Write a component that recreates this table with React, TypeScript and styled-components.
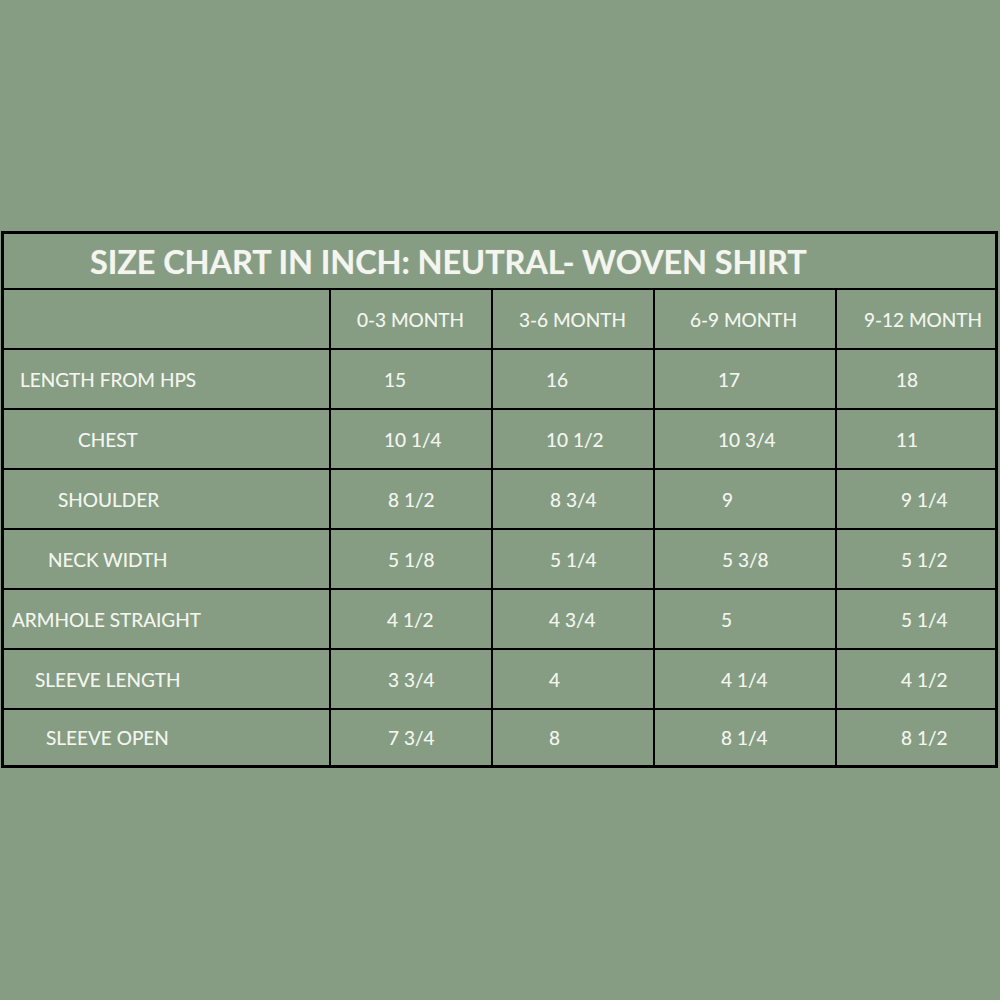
import React from "react";
import styled, { createGlobalStyle } from "styled-components";

const Global = createGlobalStyle`
  html, body { margin: 0; padding: 0; background: #869d84; }
  body { width: 1000px; height: 1000px; overflow: hidden; }
`;

const Page = styled.div`
  width: 1000px;
  height: 1000px;
  background: #869d84;
  padding: 231px 0 0 1px;
  box-sizing: border-box;
  font-family: Lato, "Open Sans", "Liberation Sans", sans-serif;
  color: #f3f5ee;
`;

const Table = styled.div`
  width: 997px;
  border: 3px solid #000;
  box-sizing: border-box;
  display: flex;
  flex-direction: column;
`;

const TitleRow = styled.div`
  height: 54px;
  display: flex;
  align-items: center;
  padding-left: 86px;
  font-size: 32.5px;
  font-weight: 700;
  letter-spacing: -0.1px;
  text-shadow: 0 0 1px rgba(255, 255, 255, 0.4);
`;

const Row = styled.div<{ $h: number }>`
  display: grid;
  grid-template-columns: 325px 162px 162px 182px 160px;
  height: ${(p) => p.$h}px;
  border-top: 2px solid #000;
`;

const Cell = styled.div<{ $pad: number; $first?: boolean }>`
  display: flex;
  align-items: center;
  padding-left: ${(p) => p.$pad}px;
  border-left: ${(p) => (p.$first ? "none" : "2px solid #000")};
  font-size: 19px;
  white-space: nowrap;
  text-shadow: 0 0 0.5px rgba(255, 255, 255, 0.5);
`;

const headers = [
  { t: "0-3 MONTH", p: 26 },
  { t: "3-6 MONTH", p: 26 },
  { t: "6-9 MONTH", p: 35 },
  { t: "9-12 MONTH", p: 27 },
];

const rows: { label: string; lp: number; vals: [string, number][] }[] = [
  { label: "LENGTH FROM HPS", lp: 16, vals: [["15", 53], ["16", 53], ["17", 63], ["18", 59]] },
  { label: "CHEST", lp: 74, vals: [["10 1/4", 53], ["10 1/2", 53], ["10 3/4", 63], ["11", 59]] },
  { label: "SHOULDER", lp: 54, vals: [["8 1/2", 57], ["8 3/4", 57], ["9", 67], ["9 1/4", 64]] },
  { label: "NECK WIDTH", lp: 44, vals: [["5 1/8", 57], ["5 1/4", 57], ["5 3/8", 67], ["5 1/2", 64]] },
  { label: "ARMHOLE STRAIGHT", lp: 8, vals: [["4 1/2", 56], ["4 3/4", 56], ["5", 66], ["5 1/4", 64]] },
  { label: "SLEEVE LENGTH", lp: 31, vals: [["3 3/4", 57], ["4", 56], ["4 1/4", 66], ["4 1/2", 64]] },
  { label: "SLEEVE OPEN", lp: 42, vals: [["7 3/4", 57], ["8", 56], ["8 1/4", 66], ["8 1/2", 64]] },
];

export default function App() {
  return (
    <>
      <Global />
      <Page>
        <Table>
          <TitleRow>SIZE CHART IN INCH: NEUTRAL- WOVEN SHIRT</TitleRow>
          <Row $h={58}>
            <Cell $pad={0} $first />
            {headers.map((h) => (
              <Cell key={h.t} $pad={h.p}>{h.t}</Cell>
            ))}
          </Row>
          {rows.map((r, i) => (
            <Row key={r.label} $h={i === rows.length - 1 ? 55 : 58}>
              <Cell $pad={r.lp} $first>{r.label}</Cell>
              {r.vals.map(([v, p], j) => (
                <Cell key={j} $pad={p}>{v}</Cell>
              ))}
            </Row>
          ))}
        </Table>
      </Page>
    </>
  );
}
